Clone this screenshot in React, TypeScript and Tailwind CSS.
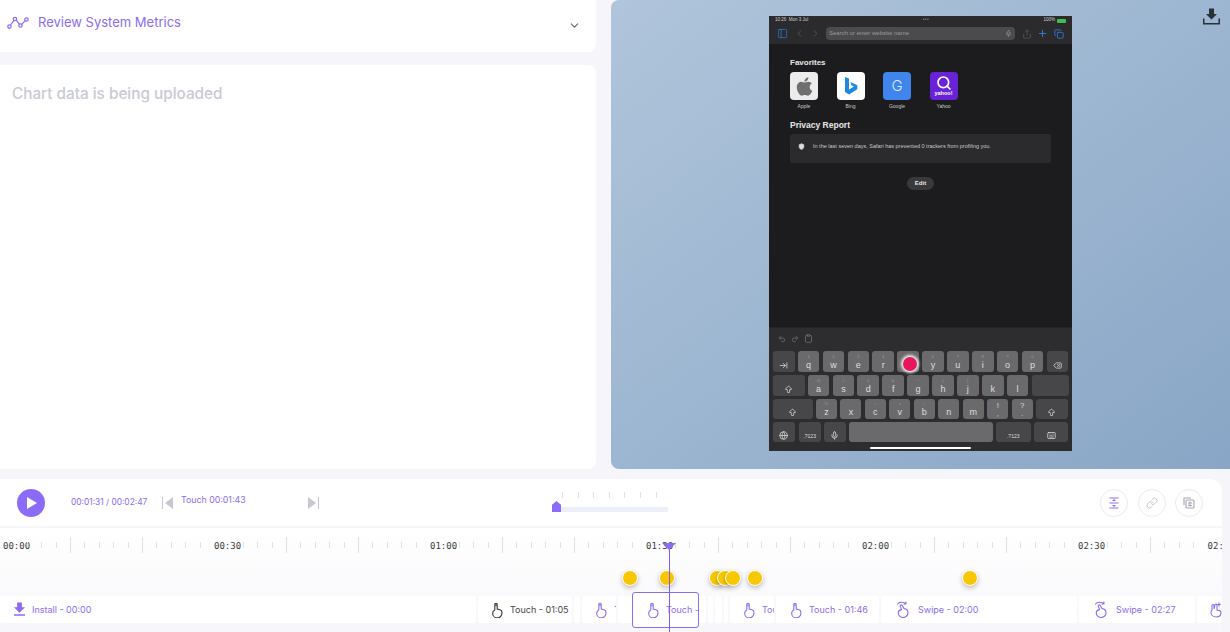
import { ArrowRightToLine, ChevronDown, Link, Mic, Plus, Undo2, Redo2, Globe, Delete, ArrowBigUp, Keyboard, Copy, Share, PanelLeft, ChevronLeft, ChevronRight, Search, Clipboard, Shield } from "lucide-react";
import { FaApple } from "react-icons/fa";
import { MdFileDownload } from "react-icons/md";

const ui = "font-['Inter',sans-serif]";

function MetricsIcon() {
  return (
    <svg width="22" height="14" viewBox="0 0 22 14" fill="none" stroke="#8b6cf0" strokeWidth="1.2">
      <circle cx="2.5" cy="10.5" r="1.7" />
      <circle cx="8" cy="3" r="1.7" />
      <circle cx="13.5" cy="9.5" r="1.7" />
      <circle cx="19.5" cy="3.5" r="1.7" />
      <path d="M3.5 9 7 4.4M9.2 4.2l3.2 4M14.8 8.3l3.4-3.6" />
    </svg>
  );
}

function TouchIcon({ className }: { className?: string }) {
  return (
    <svg width="12" height="16" viewBox="0 0 12 16" fill="none" stroke="currentColor" strokeWidth="1.1" className={`shrink-0 ${className ?? ""}`}>
      <path d="M3.8 8V2.4a1.2 1.2 0 0 1 2.4 0V7l2.8.7c1.2.3 1.9 1.1 1.9 2.3v1.2a4.6 4.6 0 0 1-9.2.2c-.1-1.6.4-2.6 2.1-3.4z" />
      <path d="M5 1.2v3" strokeWidth="1.8" opacity="0.6" />
    </svg>
  );
}

function SwipeIcon() {
  return (
    <svg width="14" height="17" viewBox="0 0 14 17" fill="none" stroke="#8b6cf0" strokeWidth="1.1" className="shrink-0">
      <path d="M5.5 8.6 4.2 5.2a1.1 1.1 0 0 1 2-.8L8 7.6c2.2.2 4 1.3 4 3.9a4.9 4.9 0 0 1-9.8.2c0-1.5 1.2-2.6 3.3-3.1z" />
      <path d="M1 3.5C3 1.2 6.500 .8 9.500 2.500M9.800 .6l.2 2.300-2.300.4" />
    </svg>
  );
}

function TapIcon() {
  return (
    <svg width="14" height="17" viewBox="0 0 14 17" fill="none" stroke="#8b6cf0" strokeWidth="1.1" className="shrink-0">
      <path d="M3 9V4.500a1 1 0 0 1 2 0V8l1-4a1 1 0 0 1 2 .3V9l2.400.6c1 .3 1.600 1 1.600 2A4.700 4.700 0 0 1 7.400 16C4 16 2 14 2 11.500 2 10.500 2.300 9.600 3 9z" />
      <path d="M10 1.500v4M8.200 3.500h3.600" />
    </svg>
  );
}

function TrayDownload({ size, className }: { size: number; className?: string }) {
  return (
    <svg width={size} height={size} viewBox="0 0 17 16" fill="currentColor" className={className}>
      <path d="M6 0h5v5.500h3l-5.500 5.500L3 5.500h3z" />
      <path d="M0 10v6h17v-6h-1.500v4.500h-14V10z" />
    </svg>
  );
}

function Segment({ label, first, tail }: { label?: string; first?: boolean; tail?: string }) {
  const minor = <div className="w-[14.4px] h-[6px] border-l border-[#e2e3ea] shrink-0" />;
  return (
    <div className="flex items-center w-[72px] shrink-0 h-[16px]">
      {label ? (
        <div className={`w-[28.8px] shrink-0 mt-[2px] text-[9px] leading-none text-[#3a3a3a] whitespace-nowrap font-['DejaVu_Sans_Mono',monospace] ${first ? "pl-[5px]" : ""}`}>
          {label}
        </div>
      ) : (
        <>
          <div className="w-[14.4px] h-[16px] border-l border-[#dfe0e8] shrink-0" />
          {minor}
        </>
      )}
      {minor}
      {minor}
      {tail ? (
        <div className="shrink-0 mt-[2px] text-[9px] leading-none text-[#3a3a3a] whitespace-nowrap font-['DejaVu_Sans_Mono',monospace]">{tail}</div>
      ) : (
        minor
      )}
    </div>
  );
}

function Key({ w, dark, main, hint, children }: { w: string; dark?: boolean; main?: string; hint?: string; children?: React.ReactNode }) {
  return (
    <div className={`${w} h-full shrink-0 rounded-[3px] relative flex flex-col items-center justify-end pb-[2px] text-[#dedede] ${dark ? "bg-[#47474a]" : "bg-[#6a6a6c]"}`}>
      {hint && <span className="text-[4px] leading-none text-[#9a9a9c] mb-[1px]">{hint}</span>}
      {main && <span className="text-[9px] leading-[10px]">{main}</span>}
      {children}
    </div>
  );
}

function Tile({ bg, name, children }: { bg: string; name: string; children: React.ReactNode }) {
  return (
    <div className="w-[28px] flex flex-col items-center shrink-0">
      <div className={`w-[28px] h-[28px] rounded-[4px] flex items-center justify-center ${bg}`}>{children}</div>
      <span className="text-[5px] leading-none mt-[4px] text-[#c8c8c8] font-medium">{name}</span>
    </div>
  );
}

const row1 = [["q", "1"], ["w", "2"], ["e", "3"], ["r", "4"], ["t", "5"], ["y", "6"], ["u", "7"], ["i", "8"], ["o", "9"], ["p", "0"]];
const row2 = [["a", "@"], ["s", "#"], ["d", "£"], ["f", "&"], ["g", "*"], ["h", "("], ["j", ")"], ["k", "'"], ["l", '"']];
const row3 = [["z", "%"], ["x", "-"], ["c", "+"], ["v", "="], ["b", "/"], ["n", ";"], ["m", ":"]];

function Phone() {
  return (
    <div className="w-[303px] h-[435px] bg-[#1c1c1e] flex flex-col font-['Liberation_Sans',sans-serif] shrink-0">
      <div className="h-[28px] bg-[#2b2b2d] shrink-0 flex flex-col">
        <div className="flex justify-between items-center h-[9px] px-[6px] text-[4.5px] text-[#d0d0d0]">
          <span>10:26&nbsp;&nbsp;Mon 3 Jul</span>
          <span className="tracking-widest text-[#888]">•••</span>
          <span className="flex items-center gap-[2px]">100%<span className="w-[9px] h-[4px] bg-[#3fbf4f] rounded-[1px]" /></span>
        </div>
        <div className="flex items-center h-[17px] pl-[8px] pr-[6px] text-[#2f7fe0]">
          <PanelLeft size={11} strokeWidth={1.5} />
          <ChevronLeft size={11} className="ml-[6px] text-[#555]" />
          <ChevronRight size={11} className="ml-[5px] text-[#555]" />
          <div className="ml-[5px] w-[189px] h-[13px] rounded-[4px] bg-[#4b4b4e] flex items-center justify-between px-[3px] text-[6px] text-[#9a9a9c]">
            <span>Search or enter website name</span>
            <Mic size={7} />
          </div>
          <Share size={10} className="ml-[7px] text-[#555]" />
          <Plus size={11} className="ml-[5px]" />
          <Copy size={10} className="ml-[6px]" />
        </div>
      </div>
      <div className="flex-1 px-[21px] pt-[14px] flex flex-col text-[#e8e8e8]">
        <h3 className="text-[8px] leading-[10px] font-bold">Favorites</h3>
        <div className="flex gap-[18.5px] mt-[4px]">
          <Tile bg="bg-[#ececec]" name="Apple"><FaApple size={21} color="#6f6f6f" /></Tile>
          <Tile bg="bg-white" name="Bing">
            <svg width="14" height="20" viewBox="0 0 14 20"><path d="M1 1l4 1.500v11l5-3-2.500-1.200L6.300 6l7 3.200v4L5 18.500 1 16z" fill="#1b8ae0" /></svg>
          </Tile>
          <Tile bg="bg-[#3f85ec]" name="Google"><span className="text-[15px] font-['Inter',sans-serif] font-light text-[#dfe9fb]">G</span></Tile>
          <Tile bg="bg-[#6a22d8]" name="Yahoo">
            <div className="flex flex-col items-center">
              <Search size={16} strokeWidth={2.5} className="text-white" />
              <span className="text-[5.5px] leading-none font-bold text-white">yahoo!</span>
            </div>
          </Tile>
        </div>
        <h3 className="text-[8.5px] leading-[10px] font-bold mt-[11px]">Privacy Report</h3>
        <div className="mt-[4px] h-[29px] w-[261px] rounded-[3px] bg-[#2b2b2d] flex items-center pl-[8px] pb-[5px] text-[5.5px] text-[#c8c8c8]">
          <Shield size={7} fill="#ddd" className="mr-[8px] text-[#ddd]" />
          In the last seven days, Safari has prevented 0 trackers from profiling you.
        </div>
        <div className="self-center mt-[14px] w-[27px] h-[13px] rounded-full bg-[#39393b] flex items-center justify-center text-[6px] font-bold">Edit</div>
      </div>
      <div className="h-[124px] bg-[#2d2d2f] shrink-0 flex flex-col border-t border-[#252527] relative">
        <div className="h-[23px] flex items-center gap-[5px] pl-[9px] pb-[2px] text-[#77777a]">
          <Undo2 size={8} />
          <Redo2 size={8} />
          <Clipboard size={9} />
        </div>
        <div className="flex flex-col gap-[3px] px-[4px]">
          <div className="flex h-[21px] gap-[3.2px]">
            <Key w="w-[21.5px]" dark><ArrowRightToLine size={9} /></Key>
            <div className="w-[1px] -ml-[3.2px]" />
            {row1.map(([m, h]) => (
              <Key key={m} w="w-[21.7px]" main={m} hint={h} />
            ))}
            <Key w="w-[21.5px]" dark><Delete size={9} /></Key>
          </div>
          <div className="flex h-[21px] gap-[3.2px]">
            <Key w="w-[31.5px]" dark><ArrowBigUp size={9} /></Key>
            {row2.map(([m, h]) => (
              <Key key={m} w="w-[21.7px]" main={m} hint={h} />
            ))}
            <Key w="w-[37px]" dark />
          </div>
          <div className="flex h-[20px] gap-[3.3px]">
            <Key w="w-[39.5px]" dark><ArrowBigUp size={9} /></Key>
            {row3.map(([m, h]) => (
              <Key key={m} w="w-[21.2px]" main={m} hint={h} />
            ))}
            <Key w="w-[21.2px]"><span className="text-[8px] leading-[8px]">!</span><span className="text-[7px] leading-[7px]">,</span></Key>
            <Key w="w-[21.2px]"><span className="text-[8px] leading-[8px]">?</span><span className="text-[7px] leading-[7px]">.</span></Key>
            <Key w="w-[31.5px]" dark><ArrowBigUp size={9} /></Key>
          </div>
          <div className="flex h-[20px] gap-[3.2px]">
            <Key w="w-[21.5px]" dark><Globe size={9} /></Key>
            <Key w="w-[22px] ml-[1px]" dark><span className="text-[5px] leading-[8px]">.?123</span></Key>
            <Key w="w-[22px]" dark><Mic size={9} /></Key>
            <Key w="w-[143.5px]" />
            <Key w="w-[35px]" dark><span className="text-[5px] leading-[8px]">.?123</span></Key>
            <Key w="w-[34.5px]" dark><Keyboard size={9} /></Key>
          </div>
        </div>
        <div className="mx-auto mt-[5px] w-[101px] h-[2px] rounded-full bg-white" />
        {/* touch marker */}
        <div className="absolute left-[133.5px] top-[28.5px] w-[14px] h-[14px] rounded-full bg-[#e8175d] shadow-[0_0_3px_2px_#f4f4f4]" />
      </div>
    </div>
  );
}

type Ev = { w: string; icon?: "touch" | "touchDark" | "swipe" | "install" | "tap"; label?: string; dark?: boolean; pad?: string };

const events: Ev[] = [
  { w: "w-[476px]", icon: "install", label: "Install - 00:00", pad: "pl-[10px] gap-[3px]" },
  { w: "w-[94px]", icon: "touchDark", label: "Touch - 01:05", dark: true, pad: "pl-[13px] gap-[7px]" },
  { w: "w-[6px]" },
  { w: "w-[34px]", icon: "touch", label: "T", pad: "pl-[13px] gap-[7px]" },
  { w: "w-[88px]" },
  { w: "w-[5px]" },
  { w: "w-[7px]" },
  { w: "w-[4px]" },
  { w: "w-[44px]", icon: "touch", label: "Tou", pad: "pl-[13px] gap-[7px]" },
  { w: "w-[103px]", icon: "touch", label: "Touch - 01:46", pad: "pl-[14px] gap-[7px]" },
  { w: "w-[196px]", icon: "swipe", label: "Swipe - 02:00", pad: "pl-[15px] gap-[8px]" },
  { w: "w-[116px]", icon: "swipe", label: "Swipe - 02:27", pad: "pl-[15px] gap-[8px]" },
  { w: "w-[25px]", icon: "tap", pad: "pl-[12px]" },
];

function EvIcon({ kind }: { kind: Ev["icon"] }) {
  if (kind === "install") return <MdFileDownload size={19} className="text-[#8b6cf0] shrink-0" />;
  if (kind === "touchDark") return <TouchIcon className="text-[#333]" />;
  if (kind === "touch") return <TouchIcon className="text-[#8b6cf0]" />;
  if (kind === "swipe") return <SwipeIcon />;
  return <TapIcon />;
}

const ruler = ["00:00", "", "", "00:30", "", "", "01:00", "", "", "01:30", "", "", "02:00", "", "", "02:30", ""];
const dots = ["left-[621.5px]", "left-[658.5px]", "left-[708.5px]", "left-[716.5px]", "left-[724.5px]", "left-[746.5px]", "left-[961.5px]"];
const sliderTicks = [0, 1, 2, 3, 4, 5, 6];

export default function App() {
  return (
    <div className={`${ui} w-[1230px] h-[632px] overflow-hidden bg-[#f5f5fa] flex flex-col`}>
      <div className="h-[470px] flex gap-[15px] shrink-0">
        <div className="w-[596px] h-[469px] flex flex-col gap-[13px] shrink-0">
          <div className="h-[52px] bg-white rounded-br-lg flex items-center justify-between pl-[7px] pr-[15px] pb-[7px]">
            <div className="flex items-center gap-[9px] text-[13px] text-[#8b6cf0]">
              <MetricsIcon />
              <span>Review System Metrics</span>
            </div>
            <ChevronDown size={13} className="text-[#666] mt-[5px]" />
          </div>
          <div className="flex-1 bg-white rounded-r-lg pl-[12px] pt-[19px] text-[15.3px] leading-[20px] font-medium text-[#c9cad4]">
            Chart data is being uploaded
          </div>
        </div>
        <div className="relative flex-1 h-[469px] rounded-l-lg bg-gradient-to-br from-[#b0c5db] to-[#89a6c6] flex justify-center pt-[16px]">
          <Phone />
          <TrayDownload size={17} className="absolute top-[8px] right-[10px] text-[#2b2f36]" />
        </div>
      </div>

      <div className="w-[1222px] mt-[9px] h-[47px] shrink-0 bg-white rounded-tr-xl flex items-center pl-[17px] pr-[19px]">
        <button className="w-[28px] h-[28px] rounded-full bg-[#8b6cf8] flex items-center justify-center shrink-0">
          <span className="w-0 h-0 border-y-[6px] border-y-transparent border-l-[10px] border-l-white ml-[2px]" />
        </button>
        <span className="ml-[26px] text-[8.4px] text-[#8b6cf0] whitespace-nowrap w-[91px]">00:01:31 / 00:02:47</span>
        <svg width="11" height="12" viewBox="0 0 11 12" className="shrink-0"><path d="M11 0v12L3 6zM0 0h1v12H0z" fill="#c5c8d3" /></svg>
        <span className="ml-[8px] text-[8.8px] text-[#8b6cf0] whitespace-nowrap w-[127px] -mt-[5px]">Touch 00:01:43</span>
        <svg width="11" height="12" viewBox="0 0 11 12" className="shrink-0"><path d="M0 0v12l8-6zM10 0h1v12h-1z" fill="#c5c8d3" /></svg>
        <div className="ml-[233px] w-[116px] h-[20px] flex flex-col justify-between shrink-0 -mt-[1px]">
          <div className="flex gap-[14.6px] pl-[10px]">
            {sliderTicks.map((t) => (
              <div key={t} className="w-[1px] h-[6px] bg-[#dedfe4]" />
            ))}
          </div>
          <div className="flex items-end h-[11px]">
            <div className="w-[9px] h-[11px] bg-[#8b6cf8] [clip-path:polygon(50%_0,100%_35%,100%_100%,0_100%,0_35%)]" />
            <div className="flex-1 h-[5px] bg-[#eceef8]" />
          </div>
        </div>
        <div className="ml-auto flex gap-[9.5px]">
          <div className="w-[28px] h-[28px] rounded-full border border-[#ebebf1] flex items-center justify-center">
            <svg width="12" height="12" viewBox="0 0 12 12" fill="none" stroke="#8b6cf0" strokeWidth="1"><path d="M1.500 1h9M1.500 11h9M1.500 6h9" /><path d="M6 2l2 2H4zM6 10l2-2H4z" fill="#8b6cf0" stroke="none" /></svg>
          </div>
          <div className="w-[28px] h-[28px] rounded-full border border-[#ebebf1] flex items-center justify-center">
            <Link size={12} strokeWidth={1.5} className="text-[#b3b5c2]" />
          </div>
          <div className="w-[28px] h-[28px] rounded-full border border-[#ebebf1] flex items-center justify-center">
            <svg width="12" height="12" viewBox="0 0 12 12" fill="none" stroke="#a5a7b4" strokeWidth="1.1">
              <path d="M1 8V1h7" />
              <rect x="3" y="3" width="8" height="8" rx="1" />
              <path d="M5 6h4M5 8.500h4M7 4.500v5" />
            </svg>
          </div>
        </div>
      </div>

      <div className="relative w-[1222px] h-[104px] mt-[2px] shrink-0 overflow-hidden bg-gradient-to-b from-white to-[#f7f7fb] flex flex-col">
        <div className="h-[68px] shrink-0 pt-[9px] -ml-[2px] flex items-start">
          {ruler.map((r, i) => (
            <Segment key={i} label={r || undefined} first={i === 0} tail={i === 16 ? "02:" : undefined} />
          ))}
        </div>
        <div className="flex gap-[2px] h-[27px] shrink-0">
          {events.map((e, i) => (
            <div key={i} className={`${e.w} ${e.pad ?? ""} shrink-0 bg-white rounded-[3px] flex items-center overflow-hidden text-[9px] whitespace-nowrap ${e.dark ? "text-[#444]" : "text-[#8b6cf0]"}`}>
              {e.icon && <EvIcon kind={e.icon} />}
              {e.label && <span>{e.label}</span>}
            </div>
          ))}
        </div>

        {/* selected event */}
        <div className="absolute left-[632px] top-[64px] w-[67px] h-[36px] border border-[#8b6cf0] rounded-[3px] bg-white flex items-center pl-[14px] gap-[7px] overflow-hidden text-[9px] text-[#8b6cf0] whitespace-nowrap">
          <TouchIcon />
          <span>Touch -</span>
        </div>

        {dots.map((d) => (
          <div key={d} className={`absolute ${d} top-[42px] w-[16px] h-[16px] rounded-full bg-[#f7c800] border border-white shadow-[0_2px_5px_rgba(0,0,0,0.25)]`} />
        ))}

        {/* playhead */}
        <div className="absolute left-[669px] top-[16px] bottom-0 w-[1px] bg-[#7c5ce8]" />
        <div className="absolute left-[662px] top-[15px] w-0 h-0 border-x-[7px] border-x-transparent border-t-[7px] border-t-[#8b6cf8]" />
      </div>
    </div>
  );
}
